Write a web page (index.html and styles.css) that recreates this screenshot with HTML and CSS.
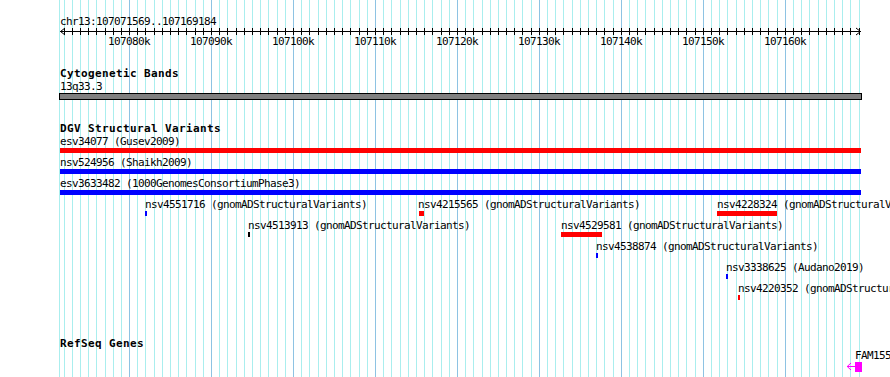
FILE: index.html
```html
<!DOCTYPE html>
<html lang="en">
<head>
<meta charset="utf-8">
<title>chr13:107071569..107169184</title>
<link rel="stylesheet" href="styles.css">
</head>
<body>
<div class="panel">
  <svg class="grid" width="890" height="377" viewBox="0 0 890 377" aria-hidden="true">
    <path class="grid-minor" d="M59.5 0V377M64.5 0V377M72.5 0V377M80.5 0V377M88.5 0V377M96.5 0V377M105.5 0V377M113.5 0V377M121.5 0V377M137.5 0V377M145.5 0V377M154.5 0V377M162.5 0V377M170.5 0V377M178.5 0V377M186.5 0V377M195.5 0V377M203.5 0V377M219.5 0V377M227.5 0V377M236.5 0V377M244.5 0V377M252.5 0V377M260.5 0V377M268.5 0V377M277.5 0V377M285.5 0V377M301.5 0V377M309.5 0V377M318.5 0V377M326.5 0V377M334.5 0V377M342.5 0V377M350.5 0V377M359.5 0V377M367.5 0V377M383.5 0V377M391.5 0V377M400.5 0V377M408.5 0V377M416.5 0V377M424.5 0V377M432.5 0V377M441.5 0V377M449.5 0V377M465.5 0V377M473.5 0V377M482.5 0V377M490.5 0V377M498.5 0V377M506.5 0V377M514.5 0V377M522.5 0V377M531.5 0V377M547.5 0V377M555.5 0V377M563.5 0V377M572.5 0V377M580.5 0V377M588.5 0V377M596.5 0V377M604.5 0V377M613.5 0V377M629.5 0V377M637.5 0V377M645.5 0V377M654.5 0V377M662.5 0V377M670.5 0V377M678.5 0V377M686.5 0V377M695.5 0V377M711.5 0V377M719.5 0V377M727.5 0V377M736.5 0V377M744.5 0V377M752.5 0V377M760.5 0V377M768.5 0V377M777.5 0V377M793.5 0V377M801.5 0V377M809.5 0V377M818.5 0V377M826.5 0V377M834.5 0V377M842.5 0V377M850.5 0V377M859.5 0V377"/>
    <path class="grid-major" d="M129.5 0V377M211.5 0V377M293.5 0V377M375.5 0V377M457.5 0V377M539.5 0V377M621.5 0V377M703.5 0V377M785.5 0V377"/>
  </svg>

  <section class="track ruler-track">
    <div class="seg-name">chr13:107071569..107169184</div>
    <svg class="ruler" width="801" height="7" viewBox="0 0 801 7" aria-hidden="true">
      <path class="ruler-line" d="M0 3.5H800.5"/>
      <path class="ruler-ticks" d="M4.5 0v7M12.5 0v7M20.5 0v7M28.5 0v7M36.5 0v7M45.5 0v7M53.5 0v7M61.5 0v7M69.5 0v7M77.5 0v7M85.5 0v7M94.5 0v7M102.5 0v7M110.5 0v7M118.5 0v7M126.5 0v7M135.5 0v7M143.5 0v7M151.5 0v7M159.5 0v7M167.5 0v7M176.5 0v7M184.5 0v7M192.5 0v7M200.5 0v7M208.5 0v7M217.5 0v7M225.5 0v7M233.5 0v7M241.5 0v7M249.5 0v7M258.5 0v7M266.5 0v7M274.5 0v7M282.5 0v7M290.5 0v7M299.5 0v7M307.5 0v7M315.5 0v7M323.5 0v7M331.5 0v7M340.5 0v7M348.5 0v7M356.5 0v7M364.5 0v7M372.5 0v7M381.5 0v7M389.5 0v7M397.5 0v7M405.5 0v7M413.5 0v7M422.5 0v7M430.5 0v7M438.5 0v7M446.5 0v7M454.5 0v7M462.5 0v7M471.5 0v7M479.5 0v7M487.5 0v7M495.5 0v7M503.5 0v7M512.5 0v7M520.5 0v7M528.5 0v7M536.5 0v7M544.5 0v7M553.5 0v7M561.5 0v7M569.5 0v7M577.5 0v7M585.5 0v7M594.5 0v7M602.5 0v7M610.5 0v7M618.5 0v7M626.5 0v7M635.5 0v7M643.5 0v7M651.5 0v7M659.5 0v7M667.5 0v7M676.5 0v7M684.5 0v7M692.5 0v7M700.5 0v7M708.5 0v7M717.5 0v7M725.5 0v7M733.5 0v7M741.5 0v7M749.5 0v7M758.5 0v7M766.5 0v7M774.5 0v7M782.5 0v7M790.5 0v7M799.5 0v7"/>
      <path class="ruler-arrow" d="M5 0L0.5 3.5L5 7M796 0L800.5 3.5L796 7"/>
    </svg>
    <div class="tick-labels">
      <span style="left:48px">107080k</span>
      <span style="left:130px">107090k</span>
      <span style="left:212px">107100k</span>
      <span style="left:294px">107110k</span>
      <span style="left:376px">107120k</span>
      <span style="left:458px">107130k</span>
      <span style="left:540px">107140k</span>
      <span style="left:622px">107150k</span>
      <span style="left:704px">107160k</span>
    </div>
  </section>

  <section class="track cyto-track">
    <h2 class="track-title">Cytogenetic Bands</h2>
    <div class="band-label">13q33.3</div>
    <div class="band-bar"></div>
  </section>

  <section class="track dgv-track">
    <h2 class="track-title">DGV Structural Variants</h2>
    <div class="row">
      <div class="feat" style="left:0"><div class="feat-label">esv34077 (Gusev2009)</div><div class="bar red" style="width:801px"></div></div>
    </div>
    <div class="row">
      <div class="feat" style="left:0"><div class="feat-label">nsv524956 (Shaikh2009)</div><div class="bar blue" style="width:801px"></div></div>
    </div>
    <div class="row">
      <div class="feat" style="left:0"><div class="feat-label">esv3633482 (1000GenomesConsortiumPhase3)</div><div class="bar blue" style="width:801px"></div></div>
    </div>
    <div class="row">
      <div class="feat" style="left:85px"><div class="feat-label">nsv4551716 (gnomADStructuralVariants)</div><div class="bar blue" style="width:2px"></div></div>
      <div class="feat" style="left:358px"><div class="feat-label">nsv4215565 (gnomADStructuralVariants)</div><div class="bar red" style="width:5px;margin-left:1px"></div></div>
      <div class="feat" style="left:657px"><div class="feat-label">nsv4228324 (gnomADStructuralVariants)</div><div class="bar red" style="width:60px"></div></div>
    </div>
    <div class="row">
      <div class="feat" style="left:188px"><div class="feat-label">nsv4513913 (gnomADStructuralVariants)</div><div class="bar black" style="width:2px"></div></div>
      <div class="feat" style="left:501px"><div class="feat-label">nsv4529581 (gnomADStructuralVariants)</div><div class="bar red" style="width:41px"></div></div>
    </div>
    <div class="row">
      <div class="feat" style="left:536px"><div class="feat-label">nsv4538874 (gnomADStructuralVariants)</div><div class="bar blue" style="width:2px"></div></div>
    </div>
    <div class="row">
      <div class="feat" style="left:666px"><div class="feat-label">nsv3338625 (Audano2019)</div><div class="bar blue" style="width:2px"></div></div>
    </div>
    <div class="row">
      <div class="feat" style="left:678px"><div class="feat-label">nsv4220352 (gnomADStructuralVariants)</div><div class="bar red" style="width:2px"></div></div>
    </div>
  </section>

  <section class="track refseq-track">
    <h2 class="track-title">RefSeq Genes</h2>
    <div class="gene-row">
      <div class="gene" style="left:786px">
        <div class="gene-label">FAM155A</div>
        <svg class="gene-glyph" width="16" height="10" viewBox="0 0 16 10" aria-hidden="true">
          <path class="gene-arrow" d="M1 4.5H9M5 1L1.2 4.5L5 8"/>
          <rect class="gene-box" x="9" y="0" width="7" height="10"/>
        </svg>
      </div>
    </div>
  </section>
</div>
</body>
</html>
```

FILE: styles.css
```css
html, body {
  margin: 0;
  padding: 0;
  background: #ffffff;
}

body {
  font-family: "DejaVu Sans Mono", "Liberation Mono", monospace;
  font-size: 11px;
  line-height: 13px;
  letter-spacing: -0.62px;
  color: #000000;
}

.panel {
  position: relative;
  z-index: 0;
  width: 890px;
  height: 377px;
  padding-top: 15px;
  box-sizing: border-box;
  overflow: hidden;
}

.grid {
  position: absolute;
  left: 0;
  top: 0;
  z-index: -1;
  shape-rendering: crispEdges;
}

.grid-minor {
  stroke: #aaeeee;
  stroke-width: 1;
  fill: none;
}

.grid-major {
  stroke: #8ec3e3;
  stroke-width: 1;
  fill: none;
}

.track {
  padding-left: 60px;
}

.seg-name {
  height: 13px;
  white-space: nowrap;
}

.ruler {
  display: block;
  width: 801px;
  height: 7px;
  overflow: visible;
}

.ruler-line,
.ruler-ticks {
  stroke: #000000;
  stroke-width: 1;
  fill: none;
  shape-rendering: crispEdges;
}

.ruler-arrow {
  stroke: #000000;
  stroke-width: 1;
  fill: none;
}

.tick-labels {
  position: relative;
  height: 13px;
}

.tick-labels span {
  position: absolute;
  top: 0;
  white-space: nowrap;
}

.track-title {
  margin: 0;
  font-size: 11px;
  line-height: 13px;
  font-weight: bold;
  letter-spacing: 0.38px;
  white-space: nowrap;
}

.cyto-track {
  margin-top: 19px;
}

.band-label {
  height: 13px;
}

.band-bar {
  margin-left: -1px;
  width: 801px;
  height: 5px;
  border: 1px solid #000000;
  background: #808080;
}

.dgv-track {
  margin-top: 22px;
}

.row {
  position: relative;
  height: 21px;
}

.feat {
  position: absolute;
  top: 0;
  white-space: nowrap;
}

.feat-label {
  height: 13px;
}

.bar {
  height: 5px;
}

.bar.red {
  background: #ff0000;
}

.bar.blue {
  background: #0000ff;
}

.bar.black {
  background: #000000;
}

.refseq-track {
  margin-top: 34px;
}

.gene-row {
  position: relative;
  height: 22px;
}

.gene {
  position: absolute;
  top: 0;
  white-space: nowrap;
}

.gene-label {
  height: 12px;
  line-height: 12px;
  margin-left: 9px;
}

.gene-glyph {
  display: block;
}

.gene-arrow {
  stroke: #ff00ff;
  stroke-width: 1;
  fill: none;
}

.gene-box {
  fill: #ff00ff;
}
```
